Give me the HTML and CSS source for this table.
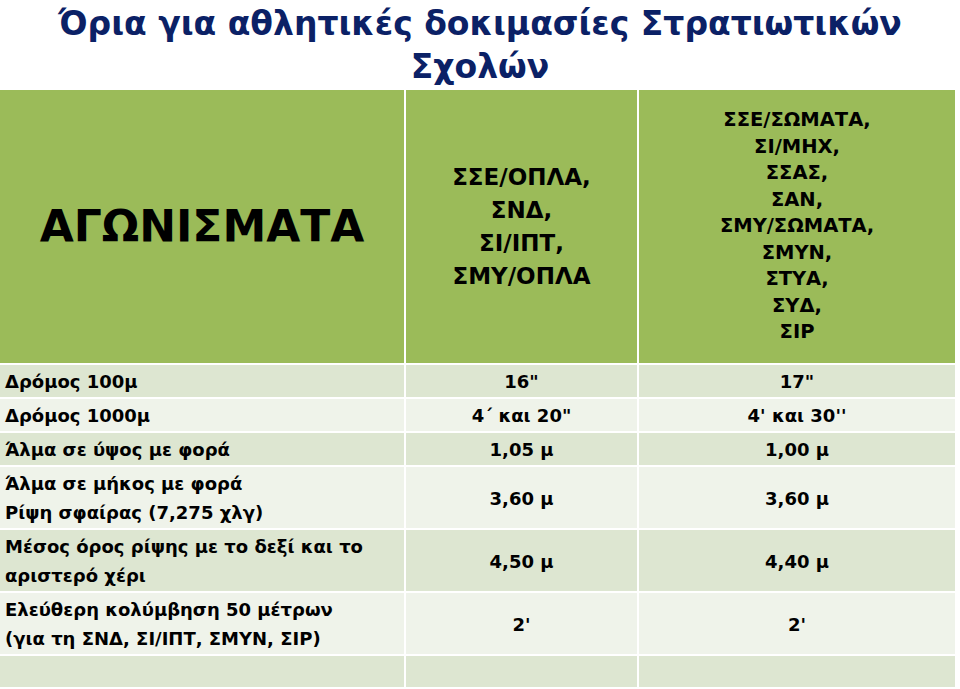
FILE: index.html
```html
<!DOCTYPE html>
<html lang="el">
<head>
<meta charset="utf-8">
<title>Όρια για αθλητικές δοκιμασίες Στρατιωτικών Σχολών</title>
<link rel="stylesheet" href="styles.css">
</head>
<body>
<h1 class="title">Όρια για αθλητικές δοκιμασίες Στρατιωτικών<br>Σχολών</h1>
<table class="limits">
  <colgroup>
    <col class="c1"><col class="c2"><col class="c3">
  </colgroup>
  <thead>
    <tr>
      <th class="h-main">ΑΓΩΝΙΣΜΑΤΑ</th>
      <th class="h-mid">ΣΣΕ/ΟΠΛΑ,<br>ΣΝΔ,<br>ΣΙ/ΙΠΤ,<br>ΣΜΥ/ΟΠΛΑ</th>
      <th class="h-small">ΣΣΕ/ΣΩΜΑΤΑ,<br>ΣΙ/ΜΗΧ,<br>ΣΣΑΣ,<br>ΣΑΝ,<br>ΣΜΥ/ΣΩΜΑΤΑ,<br>ΣΜΥΝ,<br>ΣΤΥΑ,<br>ΣΥΔ,<br>ΣΙΡ</th>
    </tr>
  </thead>
  <tbody>
    <tr class="dark"><td>Δρόμος 100μ</td><td>16"</td><td>17"</td></tr>
    <tr class="light"><td>Δρόμος 1000μ</td><td>4΄ και 20"</td><td>4' και 30''</td></tr>
    <tr class="dark"><td>Άλμα σε ύψος με φορά</td><td>1,05 μ</td><td>1,00 μ</td></tr>
    <tr class="light"><td>Άλμα σε μήκος με φορά<br>Ρίψη σφαίρας (7,275 χλγ)</td><td>3,60 μ</td><td>3,60 μ</td></tr>
    <tr class="dark"><td>Μέσος όρος ρίψης με το δεξί και το<br>αριστερό χέρι</td><td>4,50 μ</td><td>4,40 μ</td></tr>
    <tr class="light"><td>Ελεύθερη κολύμβηση 50 μέτρων<br>(για τη ΣΝΔ, ΣΙ/ΙΠΤ, ΣΜΥΝ, ΣΙΡ)</td><td>2'</td><td>2'</td></tr>
    <tr class="dark last"><td>&nbsp;</td><td>&nbsp;</td><td>&nbsp;</td></tr>
  </tbody>
</table>
</body>
</html>
```
FILE: styles.css
```css
html, body {
  margin: 0;
  padding: 0;
  background: #ffffff;
}
body {
  width: 960px;
  font-family: "DejaVu Sans", "Open Sans", sans-serif;
  color: #000;
}
.title {
  margin: 0;
  height: 90px;
  font-size: 33px;
  line-height: 43px;
  font-weight: bold;
  color: #0b2166;
  text-align: center;
  padding-top: 2px;
  box-sizing: border-box;
}
.limits {
  width: 955px;
  table-layout: fixed;
  border-collapse: separate;
  border-spacing: 0;
}
.c1 { width: 404px; }
.c2 { width: 233px; }
.c3 { width: 318px; }
.limits th, .limits td {
  border-left: 2px solid #fff;
  border-top: 2px solid #fff;
  padding: 0;
}
.limits th:first-child, .limits td:first-child { border-left: 0; }
.limits thead th {
  border-top: 0;
  background: #9bbb59;
  height: 273px;
  font-weight: bold;
}
.h-main { font-size: 44px; padding-top: 2px; }
.h-mid { font-size: 23px; line-height: 33px; }
.h-small { font-size: 19.5px; line-height: 26.5px; padding-top: 4px; }
.limits td {
  font-size: 18px;
  line-height: 29px;
  padding: 2px 0 1px;
  text-align: center;
  font-weight: bold;
}
.limits td:first-child { text-align: left; padding-left: 5px; }
.last td { line-height: 28px; }
.dark td { background: #dde6d1; }
.light td { background: #eff3ea; }
```
